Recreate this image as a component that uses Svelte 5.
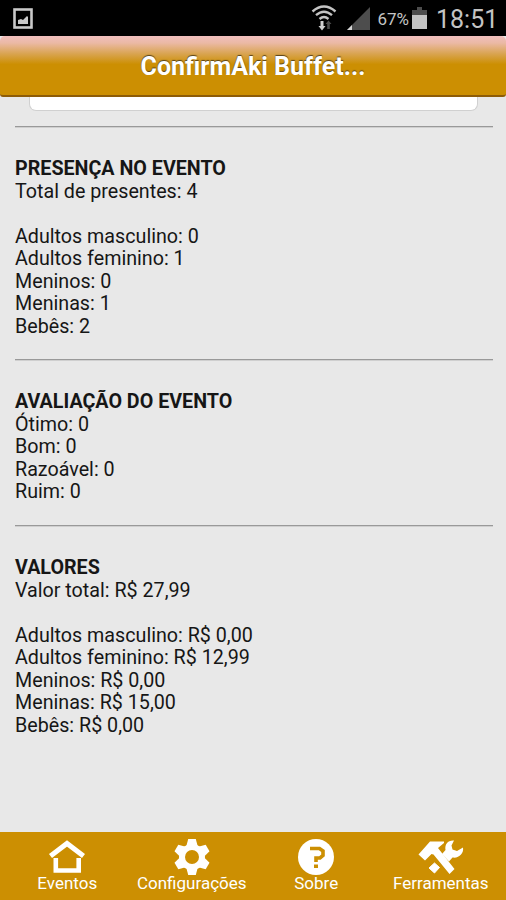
<script>
    const sections = [
        {
            title: 'PRESENÇA NO EVENTO',
            lines: [
                'Total de presentes: 4',
                '',
                'Adultos masculino: 0',
                'Adultos feminino: 1',
                'Meninos: 0',
                'Meninas: 1',
                'Bebês: 2'
            ]
        },
        {
            title: 'AVALIAÇÃO DO EVENTO',
            lines: ['Ótimo: 0', 'Bom: 0', 'Razoável: 0', 'Ruim: 0']
        },
        {
            title: 'VALORES',
            lines: [
                'Valor total: R$ 27,99',
                '',
                'Adultos masculino: R$ 0,00',
                'Adultos feminino: R$ 12,99',
                'Meninos: R$ 0,00',
                'Meninas: R$ 15,00',
                'Bebês: R$ 0,00'
            ]
        }
    ];

    const tabs = [
        { id: 'home', label: 'Eventos' },
        { id: 'gear', label: 'Configurações' },
        { id: 'info', label: 'Sobre' },
        { id: 'tools', label: 'Ferramentas' }
    ];

    let activeTab = $state('home');
</script>

<div class="screen">
    <div class="status-bar">
        <svg class="picture" width="20" height="21" viewBox="0 0 20 21">
            <rect x="1.5" y="1.5" width="17" height="18" fill="none" stroke="#c9c9c9" stroke-width="2.6" />
            <path d="M5 16v-4l3-1 2 1 4-4 1 1v7z" fill="#c9c9c9" />
        </svg>
        <svg class="wifi" width="26" height="28" viewBox="0 0 26 28">
            <g fill="none" stroke="#c4c4c4" stroke-width="2.4">
                <path d="M1.500 7.500Q13-2.500 24.500 7.500" />
                <path d="M5 11.200Q13 4.300 21 11.200" />
                <path d="M8.500 15Q13 11.200 17.500 15" />
            </g>
            <path d="M9.500 17h3v5h2l-3.500 4.500-3.500-4.500h2z" fill="#d0d0d0" />
            <path d="M16.200 25v-5h-1.700l3-3.500 3 3.500h-1.700v5z" fill="#4b4b4b" />
        </svg>
        <svg class="signal" width="23" height="24" viewBox="0 0 23 24">
            <path d="M0 24L23 1v23z" fill="#4d4d4d" />
            <path d="M0 24l5-5v5z" fill="#d4d4d4" />
        </svg>
        <span class="percent">67%</span>
        <svg class="battery" width="16" height="24" viewBox="0 0 16 24">
            <path d="M5 1h5v3h5v6H0V4h5z" fill="#4d4d4d" />
            <path d="M0 9h15v14H0z" fill="#c3c3c3" />
        </svg>
        <span class="clock">18:51</span>
    </div>

    <header>
        <h1>ConfirmAki Buffet...</h1>
    </header>

    <main>
        <div class="field"></div>
        {#each sections as section}
            <hr />
            <section>
                <h2>{section.title}</h2>
                {#each section.lines as line}
                    <p>{line}</p>
                {/each}
            </section>
        {/each}
    </main>

    <nav>
        {#each tabs as tab}
            <button class={tab.id} onclick={() => (activeTab = tab.id)}>
                <svg width="46" height="38" viewBox="0 0 46 38">
                    {#if tab.id === 'home'}
                        <path d="M6.500 18L23 5.500l16.500 12.500" fill="none" stroke="#fff" stroke-width="5" />
                        <path d="M11.800 20v12.500h22.900V20" fill="none" stroke="#fff" stroke-width="4.600" />
                    {:else if tab.id === 'gear'}
                        <g fill="#fff" transform="translate(23 19)">
                            {#each [0, 60, 120] as angle}
                                <path d="M-5.500-11.500L-3.800-18h7.600L5.500-11.500v23L3.800 18h-7.600L-5.500 11.500z" transform="rotate({angle})" />
                            {/each}
                            <circle r="13" />
                            <circle r="7" fill="#cc8f02" />
                        </g>
                    {:else if tab.id === 'info'}
                        <circle cx="23" cy="19" r="18" fill="#fff" />
                        <path d="M17 10.500h9.500l3.500 2.500v4.500l-3 2.500h-4v4" fill="none" stroke="#cc8f02" stroke-width="3.600" />
                        <path d="M21 26.500h4v3.500h-4z" fill="#cc8f02" />
                    {:else}
                        <g fill="#fff">
                            <path d="M12 3.500h14v1.500l-6 5L36.500 31l-5 5L15.500 16.500l-2-.5-6.500 6.500-6.500-6z" />
                            <path d="M16.500 25l5 4.500-5 5.500-5.500-5z" stroke="#fff" stroke-width="1" stroke-linejoin="round" />
                            <path d="M24 16l3.500-4C26.500 6 30 2 36 2.500l-2.500 5 1 4 4.500 1.500L45 9.500c1 6-4 11-10.500 10l-3.500 4z" />
                        </g>
                    {/if}
                </svg>
                <span>{tab.label}</span>
            </button>
        {/each}
    </nav>
</div>

<style>
    :global(body) {
        margin: 0;
        background: #e8e8e8;
    }

    .screen {
        display: flex;
        flex-direction: column;
        width: 506px;
        height: 900px;
        overflow: hidden;
        background: #e8e8e8;
        font-family: Roboto, sans-serif;
        color: #161616;
    }

    .status-bar {
        display: flex;
        align-items: center;
        flex: none;
        box-sizing: border-box;
        height: 36px;
        padding: 0 11px 0 13px;
        background: #000;
        color: #c4c4c4;
    }

    .wifi {
        margin-left: auto;
    }

    .signal {
        margin-left: 10px;
    }

    .percent {
        margin: 2px 3px 0 7px;
        font-size: 17px;
    }

    .clock {
        width: 59px;
        margin: 2px 0 0 8px;
        font-size: 25px;
        white-space: nowrap;
    }

    header {
        display: flex;
        align-items: center;
        justify-content: center;
        flex: none;
        box-sizing: border-box;
        height: 61px;
        border-bottom: 2px solid #8d5c08;
        border-radius: 5px 5px 3px 3px;
        background: linear-gradient(#f0bebe 0, #ebb9a4 12%, #d9a451 30%, #cc8f02 48%);
    }

    h1 {
        margin: 3px 0 0;
        font-size: 25px;
        line-height: 30px;
        font-weight: bold;
        color: #fff;
        text-shadow: 0 -1px 1px #55401a;
    }

    main {
        flex: 1;
        min-height: 0;
        padding: 0 13px 0 15px;
    }

    .field {
        box-sizing: border-box;
        height: 14px;
        margin: 0 15px 15px 14px;
        border: 1px solid #d0d0d0;
        border-top: 0;
        border-radius: 0 0 7px 7px;
        background: #fff;
    }

    hr {
        height: 2px;
        margin: 0 0 30px;
        border: 0;
        background: linear-gradient(#999 50%, #cfcfcf 50%);
    }

    section {
        margin-bottom: 21.3px;
    }

    h2,
    p {
        height: 22.5px;
        margin: 0;
        font-size: 19.7px;
        line-height: 22.5px;
        white-space: nowrap;
    }

    nav {
        display: grid;
        grid-template-columns: repeat(4, 1fr);
        flex: none;
        height: 68px;
        padding: 0 3px 0 5px;
        background: #cc8f02;
    }

    button {
        display: flex;
        flex-direction: column;
        align-items: center;
        padding: 6px 0 0;
        border: 0;
        background: none;
        font-family: inherit;
        font-size: 17px;
        line-height: 15px;
        color: #fff;
        cursor: pointer;
    }
</style>
